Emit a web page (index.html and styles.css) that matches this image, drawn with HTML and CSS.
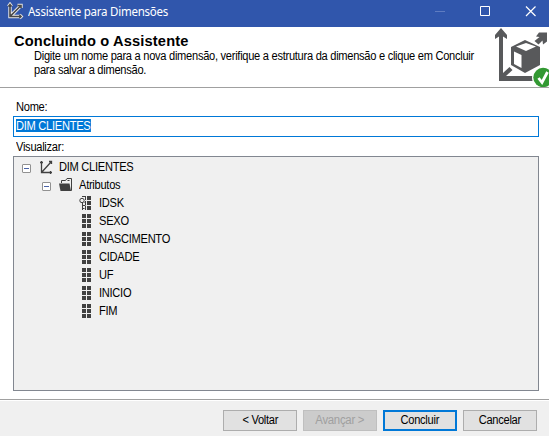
FILE: index.html
```html
<!DOCTYPE html>
<html lang="pt-BR">
<head>
<meta charset="utf-8">
<title>Assistente para Dimensões</title>
<link rel="stylesheet" href="styles.css">
</head>
<body>
<svg class="defs" width="0" height="0">
  <symbol id="attr" viewBox="0 0 16 16"><path fill="#404040" d="M4 1h4v4H4zM9 1h4v4H9zM4 6h4v4H4zM9 6h4v4H9zM4 11h4v4H4zM9 11h4v4H9z"/></symbol>
</svg>
<div class="window">
  <header class="titlebar">
    <svg class="app-icon" width="18" height="18" viewBox="0 0 18 18" fill="none">
      <path stroke="#e8e8e8" stroke-width="3.400" d="M4 2.500V14.500H15M4 14.500L14 4.500M2.500 4.500L4 2.500l1.500 2M11.500 3.500h3.500V6M13.500 13l1.500 1.500-1.500 1.500"/>
      <path stroke="#484848" stroke-width="1.600" d="M4 2.500V14.500H15M4 14.500L14 4.500M2.500 4.500L4 2.500l1.500 2M11.500 3.500h3.500V6M13.500 13l1.500 1.500-1.500 1.500"/>
    </svg>
    <span class="caption">Assistente para Dimensões</span>
    <svg class="controls" width="104" height="11" viewBox="0 0 104 11" fill="none" stroke="#fff">
      <path stroke="#5f7cc1" d="M0 5.500h10"/><path d="M45.500.5h9v9h-9z"/><path stroke-width="1.200" d="M91 .5l9.500 9.500M100.500.5L91 10"/>
    </svg>
  </header>
  <section class="intro">
    <div class="intro-text">
      <h1>Concluindo o Assistente</h1>
      <p><span class="fit">Digite um nome para a nova dimensão, verifique a estrutura da dimensão e clique em Concluir</span><br><span class="fit">para salvar a dimensão.</span></p>
    </div>
    <svg class="hero" width="55" height="60" viewBox="0 0 55 60">
      <path fill="#58595b" d="M5 54V9.500L1 12V8l6-7 6 7v4L9 9.500V46l6.500-6 3 3-6.500 6H42v5z"/>
      <path fill="#58595b" d="M40.500 14l5-4-3.500-.5 3-4h8v9l-4 3-.5-4-4 4z"/>
      <path fill="#58595b" d="M31 13l15 7v18l-15 8-14-8V20z"/>
      <path fill="#fff" d="M32 16l10 3.500-10 4.500-10-4.500zM20 24.500l7.500 3.500v13L20 37z"/>
      <circle cx="49" cy="50.500" r="11" fill="#fff"/><circle cx="49" cy="50.500" r="9.700" fill="#339933"/>
      <path d="M44.500 51l3.500 4.500 5.500-10.500" fill="none" stroke="#fff" stroke-width="2.800"/>
    </svg>
  </section>
  <main>
    <label class="name-label"><span class="fit">Nome:</span></label>
    <div class="field"><span class="fit selected">DIM CLIENTES</span></div>
    <div class="preview-label"><span class="fit">Visualizar:</span></div>
    <div class="tree">
      <div class="row root"><i class="toggle"></i><svg width="16" height="16" viewBox="0 0 16 16" fill="none" stroke="#404040"><path stroke-width="1.300" d="M3.500 2v11.500H14M3.500 13.500L13 3M2 3.500h3M11 2.500h2.500V5M12.500 12v3"/></svg><span class="fit">DIM CLIENTES</span></div>
      <div class="row folder"><i class="toggle"></i><svg width="16" height="16" viewBox="0 0 16 16"><path fill="#404040" d="M1 6.500h10.500L13 14H2.500z"/><path fill="none" stroke="#404040" d="M3.500 6V3.500h4l1.500-2h4.500v12H12M9.500 3.500h2"/></svg><span class="fit">Atributos</span></div>
      <div class="row leaf"><svg width="16" height="16" viewBox="0 0 16 16"><use href="#attr"/><path d="M1 2h6v5l-1 1h1v7H3V7L1 6z" fill="#f0f0f0"/><path d="M4.500 8V15M4.500 10.500h3M4.500 13.500h2" stroke="#404040" fill="none"/><circle cx="4" cy="5.500" r="2.200" fill="#f0f0f0" stroke="#404040"/></svg><span class="fit">IDSK</span></div>
      <div class="row leaf"><svg width="16" height="16"><use href="#attr"/></svg><span class="fit">SEXO</span></div>
      <div class="row leaf"><svg width="16" height="16"><use href="#attr"/></svg><span class="fit">NASCIMENTO</span></div>
      <div class="row leaf"><svg width="16" height="16"><use href="#attr"/></svg><span class="fit">CIDADE</span></div>
      <div class="row leaf"><svg width="16" height="16"><use href="#attr"/></svg><span class="fit">UF</span></div>
      <div class="row leaf"><svg width="16" height="16"><use href="#attr"/></svg><span class="fit">INICIO</span></div>
      <div class="row leaf"><svg width="16" height="16"><use href="#attr"/></svg><span class="fit">FIM</span></div>
    </div>
  </main>
  <footer>
    <button><span class="fit">&lt; Voltar</span></button><button class="off" disabled><span>Avançar &gt;</span></button><button class="default"><span class="fit">Concluir</span></button><button><span class="fit">Cancelar</span></button>
  </footer>
</div>
</body>
</html>
```
FILE: styles.css
```css
* { box-sizing: border-box; }
body { margin: 0; overflow: hidden; font: 12px/15px "Liberation Sans", Arial, sans-serif; letter-spacing: -0.3px; color: #000; }
.defs { display: none; }
.window { width: 549px; height: 436px; display: flex; flex-direction: column; background: #fff; }
.titlebar { height: 27px; flex: none; display: flex; background: #3056ac; color: #fff; padding: 2px 0 0 6px; }
.app-icon { flex: none; }
.caption { font: 12px/20px "Noto Sans", "Open Sans", sans-serif; letter-spacing: -0.25px; margin-left: 4px; white-space: nowrap; transform: scaleX(.96); transform-origin: 0 50%; }
.controls { margin: 4px 10px 0 auto; flex: none; }
.fit { display: inline-block; white-space: nowrap; transform: scaleX(.925); transform-origin: 0 50%; }
.intro { height: 61px; flex: none; display: flex; border-bottom: 1px solid #a0a0a0; }
.intro-text { flex: 1; min-width: 0; padding: 6px 0 0 14px; white-space: nowrap; }
h1 { margin: 0; font-size: 14px; line-height: 16px; letter-spacing: 0.15px; transform: scaleX(1.045); transform-origin: 0 50%; }
p { margin: 0 0 0 20px; line-height: 14px; }
p .fit { vertical-align: top; }
.hero { flex: none; }
main { height: 311px; flex: none; padding: 11px 10px 0 13px; }
.name-label, .preview-label { display: block; height: 17px; padding: 1px 0 0 3px; }
.preview-label { height: 19px; padding-top: 3px; }
.field { height: 21px; border: 1px solid #0078d7; padding: 2px; display: flex; }
.selected { background: #0078d7; color: #fff; height: 13px; line-height: 15px; padding-right: 1px; }
.tree { height: 235px; border: 1px solid #828790; background: #f0f0f0; padding-top: 1px; }
.row { display: flex; height: 18px; align-items: center; line-height: 18px; }
.row svg { flex: none; margin-right: 5px; }
.root { padding-left: 8px; }
.folder { padding-left: 28px; }
.leaf { padding-left: 64px; }
.toggle { width: 9px; height: 9px; margin: 3px 7px 0 0; border: 1px solid #919191; border-radius: 1px; background: linear-gradient(#4b63a7, #4b63a7) center / 5px 1px no-repeat #fff; }
footer { height: 37px; display: flex; gap: 6px; justify-content: flex-end; padding: 10px 12px 0 0; background: #f0f0f0; border-top: 1px solid #a0a0a0; box-shadow: inset 0 1px #fff; }
button { width: 74px; height: 21px; padding: 0; border: 1px solid #adadad; background: #e1e1e1; font: inherit; letter-spacing: inherit; color: #000; }
button .fit { transform-origin: 50% 50%; }
.off { background: #ccc; border-color: #bfbfbf; color: #a0a0a0; }
.off span { display: inline-block; transform: scaleX(.95); }
.default { border: 2px solid #0078d7; }
```
